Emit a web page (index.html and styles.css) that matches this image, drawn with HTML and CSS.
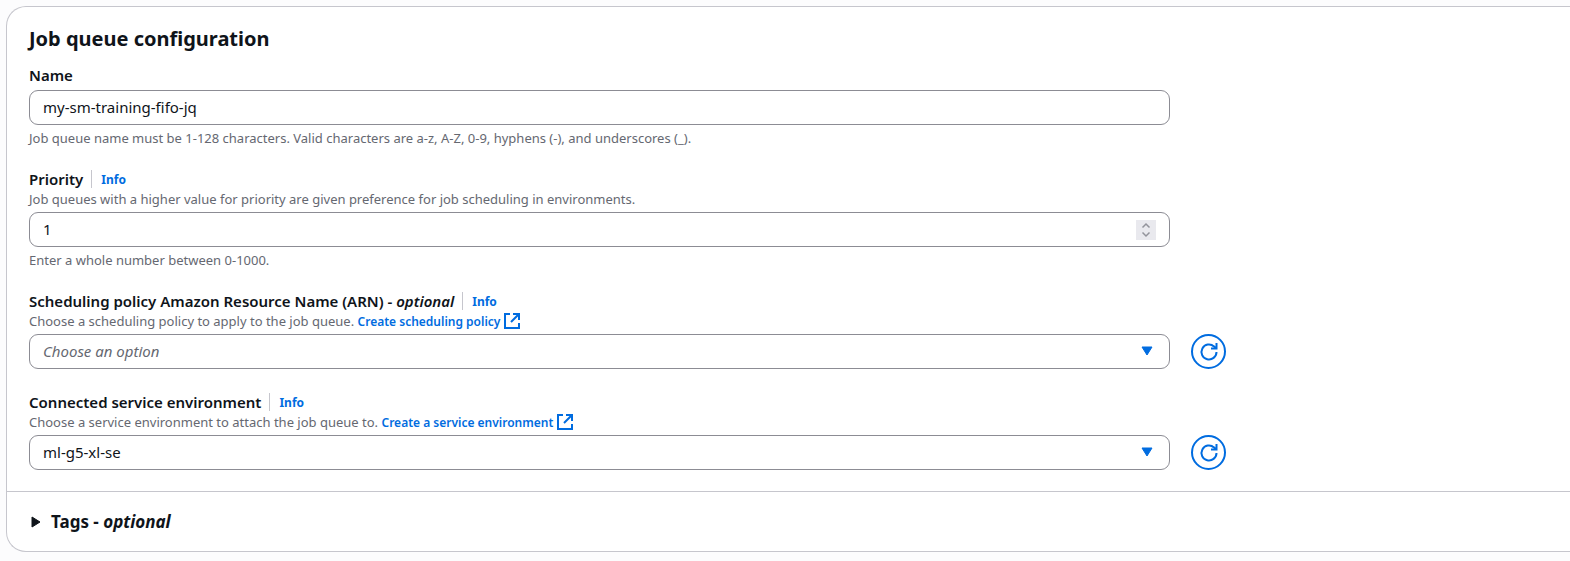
FILE: index.html
```
<!DOCTYPE html>
<html lang="en">
<head>
    <meta charset="utf-8">
    <title>Job queue configuration</title>
    <link rel="stylesheet" href="styles.css">
</head>
<body>
    <form class="card">
        <div class="card-body">
            <h2 class="card-title">Job queue configuration</h2>

            <!-- Name -->
            <div class="field">
                <div class="field-label">
                    <label for="queueName">Name</label>
                </div>
                <div class="field-control">
                    <input class="control" type="text" id="queueName" value="my-sm-training-fifo-jq" aria-describedby="queueNameHint">
                </div>
                <p class="hint" id="queueNameHint">Job queue name must be 1-128 characters. Valid characters are a-z, A-Z, 0-9, hyphens (-), and underscores (_).</p>
            </div>

            <!-- Priority -->
            <div class="field">
                <div class="field-label">
                    <label for="priority">Priority</label>
                    <a class="info" href="#">Info</a>
                </div>
                <p class="description">Job queues with a higher value for priority are given preference for job scheduling in environments.</p>
                <div class="field-control">
                    <input class="control" type="number" id="priority" min="0" max="1000" value="1" aria-describedby="priorityHint">
                    <svg class="spinner" viewBox="0 0 20 20" aria-hidden="true">
                        <rect width="20" height="20" fill="#e9e9ee"/>
                        <path d="M6.500 7.500 L10 4 L13.500 7.500 M6.500 12.500 L10 16 L13.500 12.500" stroke="#92939b" stroke-width="1.500" fill="none"/>
                    </svg>
                </div>
                <p class="hint" id="priorityHint">Enter a whole number between 0-1000.</p>
            </div>

            <!-- Scheduling policy -->
            <div class="field">
                <div class="field-label">
                    <label for="policy">Scheduling policy Amazon Resource Name (ARN) - <em>optional</em></label>
                    <a class="info" href="#">Info</a>
                </div>
                <p class="description">Choose a scheduling policy to apply to the job queue.
                    <a href="#">Create scheduling policy<svg class="external" viewBox="0 0 16 16" aria-hidden="true">
                            <path d="M6 1 H1 V15 H15 V10 M9 1 H15 V7 M15 1 L7 9" stroke="currentColor" stroke-width="2" fill="none"/>
                        </svg></a>
                </p>
                <div class="field-control">
                    <select class="control placeholder" id="policy">
                        <option>Choose an option</option>
                    </select>
                    <svg class="caret" viewBox="0 0 12 10" aria-hidden="true">
                        <path d="M1 1 H11 L6 9 Z" fill="#006ce0" stroke="#006ce0" stroke-linejoin="round"/>
                    </svg>
                </div>
                <button class="refresh" type="button" aria-label="Refresh scheduling policies">
                    <svg viewBox="0 0 18 18" aria-hidden="true">
                        <path d="M16.500 9 A7.500 7.500 0 1 1 14 3.400 L16 5" stroke="currentColor" stroke-width="2" fill="none"/>
                        <path d="M16.500 0 V5.500 H11" stroke="currentColor" stroke-width="2" fill="none"/>
                    </svg>
                </button>
            </div>

            <!-- Service environment -->
            <div class="field">
                <div class="field-label">
                    <label for="environment">Connected service environment</label>
                    <a class="info" href="#">Info</a>
                </div>
                <p class="description">Choose a service environment to attach the job queue to.
                    <a href="#">Create a service environment<svg class="external" viewBox="0 0 16 16" aria-hidden="true">
                            <path d="M6 1 H1 V15 H15 V10 M9 1 H15 V7 M15 1 L7 9" stroke="currentColor" stroke-width="2" fill="none"/>
                        </svg></a>
                </p>
                <div class="field-control">
                    <select class="control" id="environment">
                        <option>ml-g5-xl-se</option>
                    </select>
                    <svg class="caret" viewBox="0 0 12 10" aria-hidden="true">
                        <path d="M1 1 H11 L6 9 Z" fill="#006ce0" stroke="#006ce0" stroke-linejoin="round"/>
                    </svg>
                </div>
                <button class="refresh" type="button" aria-label="Refresh service environments">
                    <svg viewBox="0 0 18 18" aria-hidden="true">
                        <path d="M16.500 9 A7.500 7.500 0 1 1 14 3.400 L16 5" stroke="currentColor" stroke-width="2" fill="none"/>
                        <path d="M16.500 0 V5.500 H11" stroke="currentColor" stroke-width="2" fill="none"/>
                    </svg>
                </button>
            </div>
        </div>

        <div class="card-footer">
            <button class="expander" type="button" aria-expanded="false">
                <svg viewBox="0 0 10 12" aria-hidden="true">
                    <path d="M1 1 V11 L9 6 Z" fill="currentColor" stroke="currentColor" stroke-linejoin="round"/>
                </svg>
                <span>Tags - <em>optional</em></span>
            </button>
        </div>
    </form>
</body>
</html>
```
FILE: styles.css
```
* {
    box-sizing: border-box;
}

body {
    margin: 0;
    padding: 6px 0 9px 6px;
    font-family: "Noto Sans", "Open Sans", sans-serif;
    font-size: 15px;
    color: #0f141a;
    background: #fcfcfd;
}

a {
    color: #006ce0;
    font-size: 12px;
    font-weight: 600;
    text-decoration: none;
}

.card {
    background: white;
    border: 1px solid #c6c6cd;
    border-right: none;
    border-radius: 20px 0 0 20px;
}

.card-body {
    padding: 18px 22% 21px 22px;
}

.card-title {
    margin: 0 0 11px;
    font-size: 20px;
    line-height: 28px;
    font-weight: 700;
}

/* controls sit in the first column, refresh buttons in the second */
.field {
    display: grid;
    grid-template-columns: minmax(0, 1fr) 35px;
    column-gap: 21px;
    margin-bottom: 22px;
}

.field:last-child {
    margin-bottom: 0;
}

.field-label {
    grid-column: 1 / -1;
    display: flex;
    align-items: center;
    height: 22px;
    line-height: 20px;
    font-weight: 600;
}

.info {
    height: 18px;
    margin-left: 8px;
    padding-left: 9px;
    border-left: 1px solid #c6c6cd;
    font-weight: 700;
}

.description,
.hint {
    grid-column: 1 / -1;
    margin: 0;
    font-size: 13px;
    line-height: 18px;
    color: #656871;
}

.description a {
    line-height: 12px;
}

.hint {
    margin-top: 5px;
    line-height: 16px;
}

.field-control {
    position: relative;
    grid-column: 1;
    margin-top: 4px;
}

.control {
    display: block;
    width: 100%;
    height: 35px;
    padding: 0 13px 2px;
    font: inherit;
    color: inherit;
    background: white;
    border: 1px solid #8c8c94;
    border-radius: 9px;
    appearance: none;
}

.placeholder {
    color: #656871;
    font-style: italic;
}

.control::-webkit-inner-spin-button {
    width: 20px;
    opacity: 0;
}

.spinner {
    position: absolute;
    top: 8px;
    right: 14px;
    width: 20px;
    height: 20px;
    pointer-events: none;
}

.caret {
    position: absolute;
    top: 12px;
    right: 17px;
    width: 12px;
    height: 10px;
    pointer-events: none;
}

/* negative block margins keep the icon from stretching the line */
.external {
    width: 16px;
    height: 16px;
    margin: -2px 0 -2px 4px;
    vertical-align: -1px;
}

.refresh {
    display: flex;
    align-items: center;
    justify-content: center;
    width: 35px;
    height: 35px;
    margin-top: 4px;
    padding: 0;
    color: #006ce0;
    background: white;
    border: 2px solid #006ce0;
    border-radius: 50%;
}

.refresh svg {
    width: 18px;
    height: 18px;
    overflow: visible;
}

.card-footer {
    padding: 16px 22px;
    border-top: 1px solid #c6c6cd;
}

.expander {
    display: flex;
    align-items: center;
    gap: 10px;
    padding: 0 2px;
    font: inherit;
    font-size: 17px;
    line-height: 27px;
    font-weight: 700;
    color: inherit;
    background: none;
    border: none;
}

.expander svg {
    width: 10px;
    height: 12px;
}
```
